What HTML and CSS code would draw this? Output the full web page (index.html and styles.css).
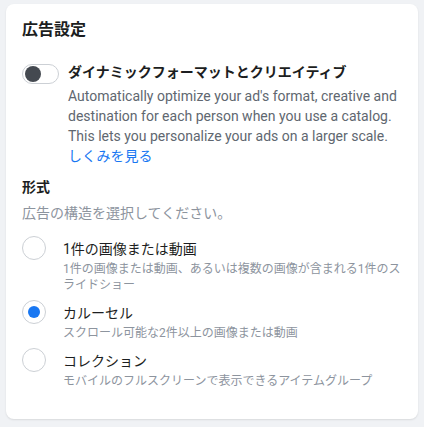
FILE: index.html
```html
<!DOCTYPE html>
<html lang="ja">
<head>
<meta charset="utf-8">
<link rel="stylesheet" href="styles.css">
</head>
<body>
<div class="card">
  <h2 class="title">広告設定</h2>
  <div class="toggle-row">
    <span class="toggle"><span class="knob"></span></span>
    <div class="toggle-text">
      <div class="toggle-label">ダイナミックフォーマットとクリエイティブ</div>
      <div class="desc">Automatically optimize your ad's format, creative and destination for each person when you use a catalog. This lets you personalize your ads on a larger scale.</div>
      <a class="link">しくみを見る</a>
    </div>
  </div>
  <div class="section-title">形式</div>
  <div class="section-sub">広告の構造を選択してください。</div>
  <div class="options">
    <div class="option">
      <span class="radio"></span>
      <div class="opt-text">
        <div class="opt-label">1件の画像または動画</div>
        <div class="opt-sub">1件の画像または動画、あるいは複数の画像が含まれる1件のスライドショー</div>
      </div>
    </div>
    <div class="option">
      <span class="radio checked"></span>
      <div class="opt-text">
        <div class="opt-label">カルーセル</div>
        <div class="opt-sub">スクロール可能な2件以上の画像または動画</div>
      </div>
    </div>
    <div class="option">
      <span class="radio"></span>
      <div class="opt-text">
        <div class="opt-label">コレクション</div>
        <div class="opt-sub">モバイルのフルスクリーンで表示できるアイテムグループ</div>
      </div>
    </div>
  </div>
</div>
</body>
</html>
```
FILE: styles.css
```css
html, body {
  margin: 0;
  padding: 0;
  background: #f0f2f5;
}
body {
  padding: 4px 6px 8px 6px;
  font-family: Roboto, "Noto Sans CJK JP", sans-serif;
  color: #1c1e21;
}
.card {
  background: #fff;
  border-radius: 8px;
  box-shadow: 0 1px 2px rgba(0, 0, 0, 0.1);
  padding: 16px 16px 33px 16px;
  height: 415px;
  box-sizing: border-box;
}
.title {
  margin: 0;
  font-size: 16px;
  font-weight: 700;
  line-height: 20px;
}
.toggle-row {
  display: flex;
  gap: 9px;
  margin-top: 24px;
}
.toggle {
  flex: none;
  width: 37px;
  height: 20px;
  box-sizing: border-box;
  border: 1px solid #ccd0d5;
  border-radius: 10px;
  background: #fff;
  display: flex;
  align-items: center;
  padding-left: 2px;
}
.knob {
  width: 16px;
  height: 16px;
  border-radius: 50%;
  background: #444950;
}
.toggle-text {
  flex: 1;
  min-width: 0;
}
.toggle-label {
  font-size: 14px;
  font-weight: 700;
  line-height: 16px;
}
.desc {
  margin-top: 6px;
  font-size: 14px;
  line-height: 20px;
  color: #606770;
}
.link {
  display: block;
  font-size: 14px;
  line-height: 20px;
  color: #1877f2;
}
.section-title {
  margin-top: 11px;
  font-size: 14px;
  font-weight: 700;
  line-height: 20px;
}
.section-sub {
  margin-top: 6px;
  font-size: 14px;
  line-height: 20px;
  color: #8d949e;
}
.options {
  margin-top: 13px;
  display: flex;
  flex-direction: column;
  gap: 7px;
}
.option {
  display: flex;
  gap: 17px;
}
.radio {
  flex: none;
  width: 24px;
  height: 24px;
  box-sizing: border-box;
  border: 1px solid #ccd0d5;
  border-radius: 50%;
  display: flex;
  align-items: center;
  justify-content: center;
}
.radio.checked::after {
  content: "";
  width: 12px;
  height: 12px;
  border-radius: 50%;
  background: #1877f2;
}
.opt-text {
  flex: 1;
  min-width: 0;
  padding-top: 3px;
}
.opt-label {
  font-size: 14px;
  line-height: 20px;
}
.opt-sub {
  margin-top: 2px;
  font-size: 12px;
  line-height: 16px;
  color: #8d949e;
}
```
